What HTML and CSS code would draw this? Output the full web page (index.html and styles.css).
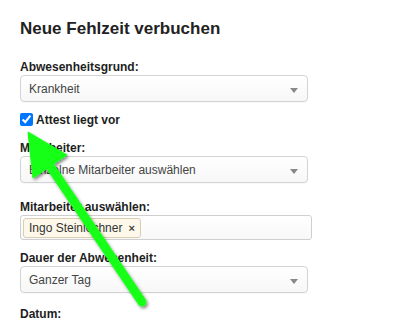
FILE: index.html
```html
<!DOCTYPE html>
<html lang="de">
<head>
<meta charset="utf-8">
<link rel="stylesheet" href="styles.css">
</head>
<body>
<div class="page">
  <h1 class="title">Neue Fehlzeit verbuchen</h1>

  <div class="group g1">
    <label class="label">Abwesenheitsgrund:</label>
    <div class="select"><span>Krankheit</span><i class="caret"></i></div>
  </div>

  <div class="check-row">
    <input type="checkbox" class="check" checked>
    <span class="check-label">Attest liegt vor</span>
  </div>

  <div class="group g2">
    <label class="label">Mitarbeiter:</label>
    <div class="select"><span>Einzelne Mitarbeiter auswählen</span><i class="caret"></i></div>
  </div>

  <div class="group g3">
    <label class="label">Mitarbeiter auswählen:</label>
    <div class="multi">
      <span class="tag">Ingo Steinlechner <b class="x">×</b></span>
    </div>
  </div>

  <div class="group g4">
    <label class="label">Dauer der Abwesenheit:</label>
    <div class="select"><span>Ganzer Tag</span><i class="caret"></i></div>
  </div>

  <div class="group g5">
    <label class="label">Datum:</label>
  </div>

  <svg class="arrow" width="409" height="323" viewBox="0 0 409 323">
    <defs>
      <filter id="sh" x="-20%" y="-20%" width="140%" height="140%">
        <feDropShadow dx="1.5" dy="2" stdDeviation="1.5" flood-color="#000" flood-opacity="0.45"/>
      </filter>
    </defs>
    <g filter="url(#sh)" fill="#14ff14" stroke="#14ff14">
      <line x1="142" y1="302" x2="50" y2="166" stroke-width="9" stroke-linecap="round"/>
      <polygon points="28,132 67,155 33,178" stroke-width="1" stroke-linejoin="round"/>
    </g>
  </svg>
</div>
</body>
</html>
```
FILE: styles.css
```css
html, body {
  margin: 0;
  padding: 0;
  background: #fff;
}
.page {
  position: relative;
  width: 409px;
  height: 323px;
  overflow: hidden;
  padding: 0 20px;
  box-sizing: border-box;
  font-family: "Liberation Sans", Arial, sans-serif;
  font-size: 12px;
  color: #222;
}
.title {
  margin: 0;
  padding-top: 19px;
  font-size: 17px;
  line-height: 20px;
  font-weight: bold;
  color: #222;
}
.group {
  display: flex;
  flex-direction: column;
}
.g1 { margin-top: 21px; }
.g2 { margin-top: 14px; }
.g3 { margin-top: 17px; }
.g4 { margin-top: 11px; }
.g5 { margin-top: 14px; }
.label {
  display: block;
  font-weight: bold;
  font-size: 12px;
  line-height: 15px;
  height: 15px;
  color: #1e1e1e;
}
.select {
  position: relative;
  width: 288px;
  height: 27px;
  box-sizing: border-box;
  border: 1px solid #d3d3d3;
  border-radius: 4px;
  background: linear-gradient(#ffffff, #f7f7f7);
  display: flex;
  align-items: center;
  padding-left: 8px;
  color: #444;
  font-size: 12px;
  box-shadow: 0 1px 1px rgba(0,0,0,0.03);
}
.caret {
  position: absolute;
  right: 9px;
  top: 12px;
  width: 0;
  height: 0;
  border-left: 4px solid transparent;
  border-right: 4px solid transparent;
  border-top: 5px solid #888;
}
.check-row {
  display: flex;
  align-items: center;
  margin-top: 10px;
  height: 15px;
}
.check {
  margin: 0 3px 0 0;
  width: 13px;
  height: 13px;
  accent-color: #0075ff;
}
.check-label {
  font-weight: bold;
  font-size: 12px;
  color: #1e1e1e;
}
.multi {
  width: 292px;
  height: 25px;
  box-sizing: border-box;
  border: 1px solid #cfcfcf;
  border-radius: 3px;
  background: linear-gradient(#ffffff, #f8f8f8);
  display: flex;
  align-items: center;
  padding-left: 2px;
}
.tag {
  display: inline-flex;
  align-items: center;
  height: 20px;
  box-sizing: border-box;
  padding: 0 5px 0 5px;
  border: 1px solid #d8ceb4;
  border-radius: 3px;
  background: #fdf8ea;
  color: #333;
  font-size: 12px;
}
.x {
  margin-left: 6px;
  font-weight: bold;
  color: #444;
  font-size: 11px;
}
.arrow {
  position: absolute;
  left: 0;
  top: 0;
  pointer-events: none;
}
```
